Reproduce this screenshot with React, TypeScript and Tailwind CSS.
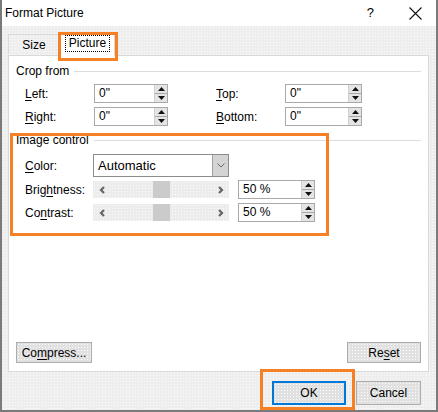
const dots =
  "bg-[radial-gradient(circle,#fbfbfb_0.7px,transparent_1px)] [background-size:3px_3px]";

const U = ({ c }: { c: string }) => <span className="underline underline-offset-2">{c}</span>;

const Spinner = () => (
  <div className="flex flex-col w-[13px] h-full bg-[#e4e4e4] border-l border-[#d0d0d0]">
    <div className="flex-1 flex items-center justify-center border-b border-[#a8a8a8]">
      <svg width="7" height="4" viewBox="0 0 7 4">
        <path d="M3.5 0 L7 4 L0 4 Z" fill="#111" />
      </svg>
    </div>
    <div className="flex-1 flex items-center justify-center">
      <svg width="7" height="4" viewBox="0 0 7 4">
        <path d="M0 0 L7 0 L3.5 4 Z" fill="#111" />
      </svg>
    </div>
  </div>
);

const SpinBox = ({ value, w }: { value: string; w: string }) => (
  <div className={`${w} h-[19px] flex border border-[#a9a9a9] bg-white`}>
    <div className="flex-1 pl-[4px] leading-[17px]">{value}</div>
    <Spinner />
  </div>
);

const Slider = () => (
  <div className={`w-[136px] h-[17px] flex items-center bg-[#ececec] ${dots}`}>
    <div className="w-[17px] flex justify-center">
      <svg width="6" height="8" viewBox="0 0 6 8">
        <path d="M5 1 L2 4 L5 7" stroke="#666666" strokeWidth="2.2" fill="none" />
      </svg>
    </div>
    <div className="w-[43px]" />
    <div className="w-[17px] h-full bg-[#cbcbcb] bg-[radial-gradient(circle,#e6e6e6_0.5px,transparent_0.7px)] [background-size:2px_2px]" />
    <div className="flex-1" />
    <div className="w-[17px] flex justify-center">
      <svg width="6" height="8" viewBox="0 0 6 8">
        <path d="M1 1 L4 4 L1 7" stroke="#666666" strokeWidth="2.2" fill="none" />
      </svg>
    </div>
  </div>
);

const Button = ({ children, w, primary }: { children: React.ReactNode; w: string; primary?: boolean }) => (
  <div
    className={`${w} flex items-center justify-center bg-[#e1e1e1] ${dots} ${
      primary ? "h-[24px] border-2 border-[#0078d7]" : "border border-[#adadad]"
    }`}
  >
    {children}
  </div>
);

const SectionHeader = ({ title }: { title: string }) => (
  <div className="flex items-center gap-[5px] h-[14px]">
    <span className="leading-[14px]">{title}</span>
    <div className="flex-1 h-px bg-[#dcdcdc]" />
  </div>
);

export default function App() {
  return (
    <div className="relative w-[438px] h-[412px] flex flex-col bg-white border-x-2 border-b-2 border-[#7a7a7a] font-['Liberation_Sans',Arial,sans-serif] text-[12px] text-black overflow-hidden">
      {/* title bar */}
      <div className="h-[26px] flex items-center pl-[3px] pr-[14px] shrink-0">
        <span className="flex-1">Format Picture</span>
        <span className="mr-[35px] text-[13px]">?</span>
        <svg width="13" height="13" viewBox="0 0 13 13">
          <path d="M0.5 0.5 L12.5 12.5 M12.5 0.5 L0.5 12.5" stroke="#111" strokeWidth="1.1" />
        </svg>
      </div>

      <div className={`flex-1 flex flex-col bg-[#eeeeee] ${dots} pl-[6px] pr-[7px]`}>
        {/* tabs */}
        <div className="h-[29px] flex items-end shrink-0">
          <div className="w-[52px] h-[20px] flex items-center justify-center border border-b-0 border-[#d9d9d9] mb-[1px]">
            Size
          </div>
          <div className="relative z-10 w-[55px] h-[24px] -mb-px flex items-center justify-center bg-white border border-b-0 border-[#d9d9d9]">
            <span className="border border-dotted border-black px-[3px] leading-[15px] mb-[2px]">Picture</span>
          </div>
        </div>

        {/* panel */}
        <div className="h-[317px] flex flex-col bg-white border border-[#d9d9d9] pl-[7px] pr-[7px] pb-[8px] shrink-0">
          <div className="mt-[8px]">
            <SectionHeader title="Crop from" />
          </div>
          <div className="mt-[6px] flex flex-col gap-[4px] pl-[9px]">
            <div className="flex items-center h-[19px]">
              <span className="w-[69px]">
                <U c="L" />eft:
              </span>
              <SpinBox value={'0"'} w="w-[74px]" />
              <span className="w-[69px] ml-[48px]">
                <U c="T" />op:
              </span>
              <SpinBox value={'0"'} w="w-[77px]" />
            </div>
            <div className="flex items-center h-[19px]">
              <span className="w-[69px]">
                <U c="R" />ight:
              </span>
              <SpinBox value={'0"'} w="w-[74px]" />
              <span className="w-[69px] ml-[48px]">
                <U c="B" />ottom:
              </span>
              <SpinBox value={'0"'} w="w-[77px]" />
            </div>
          </div>

          <div className="mt-[7px]">
            <SectionHeader title="Image control" />
          </div>
          <div className="mt-[7px] flex flex-col pl-[9px]">
            <div className="flex items-center h-[23px]">
              <span className="w-[68px]">
                <U c="C" />olor:
              </span>
              <div className="w-[136px] h-[23px] flex border border-[#8c8c8c] bg-white">
                <div className="flex-1 pl-[4px] leading-[21px] text-[13px]">Automatic</div>
                <div className="w-[16px] h-full flex items-center justify-center bg-[#d4d4d4] bg-[radial-gradient(circle,#ececec_0.5px,transparent_0.7px)] [background-size:2px_2px] border-l border-[#a0a0a0]">
                  <svg width="8" height="5" viewBox="0 0 8 5">
                    <path d="M0.5 0.5 L4 4 L7.5 0.5" stroke="#6a6a6a" fill="none" />
                  </svg>
                </div>
              </div>
            </div>
            <div className="flex items-center h-[19px] mt-[3px]">
              <span className="w-[68px]">
                Brig<U c="h" />tness:
              </span>
              <Slider />
              <div className="ml-[9px]">
                <SpinBox value="50 %" w="w-[77px]" />
              </div>
            </div>
            <div className="flex items-center h-[19px] mt-[4px]">
              <span className="w-[68px]">
                Co<U c="n" />trast:
              </span>
              <Slider />
              <div className="ml-[9px]">
                <SpinBox value="50 %" w="w-[77px]" />
              </div>
            </div>
          </div>

          <div className="flex-1" />
          <div className="flex justify-between items-end">
            <Button w="w-[76px] h-[21px]">
              Co<U c="m" />press...
            </Button>
            <Button w="w-[74px] h-[21px]">
              Re<U c="s" />et
            </Button>
          </div>
        </div>

        {/* dialog buttons */}
        <div className="mt-[9px] flex justify-end gap-[10px] pr-[8px]">
          <Button w="w-[74px]" primary>
            OK
          </Button>
          <Button w="w-[65px] h-[24px]">Cancel</Button>
        </div>
      </div>

      {/* highlight annotations */}
      <div className="absolute left-[56px] top-[32px] w-[60px] h-[29px] border-[3px] border-[#f58025] z-20" />
      <div className="absolute left-[8px] top-[133px] w-[319px] h-[103px] border-[3px] border-[#f58025] z-20" />
      <div className="absolute left-[258px] top-[369px] w-[95px] h-[41px] border-[3px] border-[#f58025] z-20" />
    </div>
  );
}
